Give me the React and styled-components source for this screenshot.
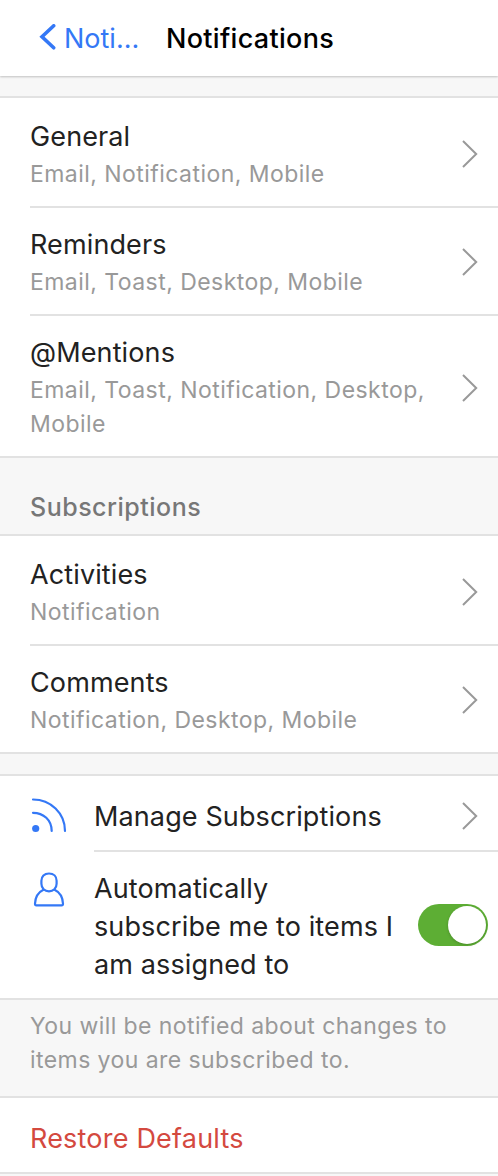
import React, { useState } from 'react';
import styled, { createGlobalStyle } from 'styled-components';

const GlobalStyle = createGlobalStyle`
   * {
      box-sizing: border-box;
   }
   body {
      margin: 0;
      background-color: #f7f7f7;
      font-family: Inter, "Liberation Sans", sans-serif;
      overflow: hidden;
   }
`;
const Page = styled.div`
   width: 498px;
   height: 1176px;
   overflow: hidden;
   background-color: #f7f7f7;
`;
const Header = styled.header`
   display: flex;
   align-items: center;
   height: 76px;
   padding-left: 39px;
   background-color: #fff;
   box-shadow: 0 1px 2px rgba(0, 0, 0, 0.22);
`;
const BackButton = styled.button`
   display: flex;
   align-items: center;
   width: 127px;
   padding: 0;
   border: none;
   background: none;
   color: #3478f6;
   font-family: inherit;
   font-size: 27px;
   line-height: 38px;
   letter-spacing: 0;
`;
const BackLabel = styled.span`
   padding: 1px 0 0 8px;
`;
const Title = styled.h1`
   margin: 0;
   padding-top: 2px;
   color: #000;
   font-size: 27px;
   font-weight: 500;
   line-height: 38px;
   letter-spacing: 0.3px;
`;
const List = styled.section`
   margin-top: ${props => props.$gap || 0}px;
   border-top: 2px solid #e2e2e2;
   border-bottom: 2px solid #e2e2e2;
   background-color: #fff;
`;
const Row = styled.div`
   display: flex;
   padding-left: 30px;
`;
const RowIcon = styled.div`
   flex: none;
   width: 64px;
   padding-top: ${props => props.$top}px;
   svg {
      display: block;
   }
`;
const RowBody = styled.div`
   flex: 1;
   display: flex;
   align-items: center;
   justify-content: space-between;
   padding: ${props => props.$top || 18}px ${props => props.$right || 20}px ${props => props.$bottom || 15}px 0;
   border-bottom: ${props => props.$last ? 'none' : '2px solid #e2e2e2'};
`;
const RowText = styled.div`
   width: ${props => props.$width || 410}px;
`;
const Label = styled.div`
   color: ${props => props.$danger ? '#d4493f' : '#222'};
   font-size: 27px;
   line-height: 38px;
   letter-spacing: ${props => props.$danger ? 0.2 : 0.12}px;
`;
const Detail = styled.div`
   margin-top: 1px;
   color: #999;
   font-size: 23px;
   line-height: 34px;
   letter-spacing: 0.45px;
`;
const SectionTitle = styled.h2`
   height: 76px;
   margin: 0;
   padding: 30px 0 0 30px;
   color: #777;
   font-size: 25px;
   font-weight: 500;
   line-height: 38px;
   letter-spacing: 0.5px;
`;
const Note = styled.p`
   height: 96px;
   margin: 0;
   padding: 9px 40px 0 30px;
   color: #999;
   font-size: 23px;
   line-height: 34px;
   letter-spacing: 0.43px;
`;
const ChevronIcon = styled.svg`
   flex: none;
   margin-bottom: ${props => props.$tall ? 0 : 2}px;
`;
const Toggle = styled.button`
   flex: none;
   display: flex;
   justify-content: ${props => props.$on ? 'flex-end' : 'flex-start'};
   width: 70px;
   height: 42px;
   margin-bottom: 4px;
   padding: 2px;
   border: none;
   border-radius: 21px;
   background-color: ${props => props.$on ? '#5dae34' : '#ccc'};
`;
const Knob = styled.span`
   width: 38px;
   height: 38px;
   border-radius: 50%;
   background-color: #fff;
   box-shadow: 0 1px 3px rgba(0, 0, 0, 0.2);
`;

function BackIcon() {
   return (
      <svg width="17" height="28" viewBox="0 0 17 28" fill="none" stroke="#3478f6" strokeWidth="3.6" strokeLinecap="round" strokeLinejoin="miter">
         <path d="M14.7 1.8L3 12.8L14.7 23.8" />
      </svg>
   );
}

function Chevron(props) {
   return (
      <ChevronIcon $tall={props.tall} width="16" height="28" viewBox="0 0 16 28" fill="none" stroke="#999" strokeWidth="2">
         <path d="M1 1L14.2 14L1 27" />
      </ChevronIcon>
   );
}

function FeedIcon() {
   return (
      <svg width="38" height="36" viewBox="0 0 38 36" fill="none" stroke="#3478f6" strokeWidth="2.2" strokeLinecap="round">
         <path d="M3 2.5C20.5 2.5 35 16 35 34" />
         <path d="M3 15.8C13.5 15.8 21.7 23 21.7 34" />
         <circle cx="5.7" cy="31.5" r="3.6" fill="#3478f6" stroke="none" />
      </svg>
   );
}

function PersonIcon() {
   return (
      <svg width="38" height="36" viewBox="0 0 38 36" fill="none" stroke="#3478f6" strokeWidth="2.2" strokeLinejoin="round">
         <path d="M19 1.5C14.3 1.5 11.4 4.6 11.4 8.8V11.8C11.4 16.3 14.7 19.4 19 19.4S26.6 16.3 26.6 11.8V8.8C26.6 4.6 23.7 1.5 19 1.5Z" />
         <path d="M13.8 17.5C8.5 20.1 5.2 25.3 5 31.8C5 33 5.4 33.4 6.4 33.4H31.6C32.6 33.4 33 33 33 31.8C32.8 25.3 29.5 20.1 24.2 17.5" />
      </svg>
   );
}

function SettingRow(props) {
   return (
      <Row>
         <RowBody $top={props.first ? 20 : 18} $last={props.last}>
            <RowText>
               <Label>{props.label}</Label>
               <Detail>{props.detail}</Detail>
            </RowText>
            <Chevron tall={props.tall} />
         </RowBody>
      </Row>
   );
}

function App() {
   const [subscribe, setSubscribe] = useState(true);

   return (
      <Page>
         <GlobalStyle />
         <Header>
            <BackButton>
               <BackIcon />
               <BackLabel>Noti...</BackLabel>
            </BackButton>
            <Title>Notifications</Title>
         </Header>
         <List $gap={20}>
            <SettingRow first label="General" detail="Email, Notification, Mobile" />
            <SettingRow label="Reminders" detail="Email, Toast, Desktop, Mobile" />
            <SettingRow last tall label="@Mentions" detail="Email, Toast, Notification, Desktop, Mobile" />
         </List>
         <SectionTitle>Subscriptions</SectionTitle>
         <List>
            <SettingRow first label="Activities" detail="Notification" />
            <SettingRow last label="Comments" detail="Notification, Desktop, Mobile" />
         </List>
         <List $gap={20}>
            <Row>
               <RowIcon $top={21}><FeedIcon /></RowIcon>
               <RowBody $top={22} $bottom={14}>
                  <RowText $width={340}>
                     <Label>Manage Subscriptions</Label>
                  </RowText>
                  <Chevron />
               </RowBody>
            </Row>
            <Row>
               <RowIcon $top={20}><PersonIcon /></RowIcon>
               <RowBody $right={10} $bottom={14} $last>
                  <RowText $width={304}>
                     <Label>Automatically subscribe me to items I am assigned to</Label>
                  </RowText>
                  <Toggle $on={subscribe} onClick={() => {setSubscribe(!subscribe)}}>
                     <Knob />
                  </Toggle>
               </RowBody>
            </Row>
         </List>
         <Note>You will be notified about changes to items you are subscribed to.</Note>
         <List>
            <Row>
               <RowBody $top={22} $bottom={14} $last>
                  <Label $danger>Restore Defaults</Label>
               </RowBody>
            </Row>
         </List>
      </Page>
   );
}
export default App;
